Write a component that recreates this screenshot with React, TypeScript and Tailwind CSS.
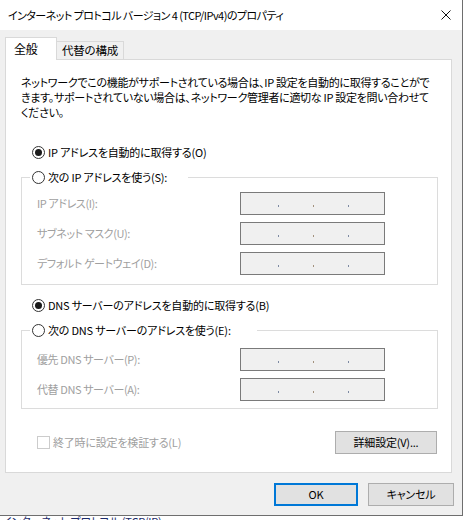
import React from 'react';

const Radio = ({ checked }: { checked?: boolean }) => (
  <div className="w-[13px] h-[13px] shrink-0 rounded-full border border-[#333333] bg-white flex items-center justify-center">
    {checked && <div className="w-[7px] h-[7px] rounded-full bg-[#1a1a1a]" />}
  </div>
);

const IpBox = () => (
  <div className="w-[145px] h-[23px] border border-[#7a7a7a] bg-[#f0f0f0] flex items-start pt-[12px] pl-[37px] gap-[34px]">
    <div className="w-px h-[2px] bg-[#7d8aa3]" />
    <div className="w-px h-[2px] bg-[#a3917d]" />
    <div className="w-px h-[2px] bg-[#7d8aa3]" />
  </div>
);

const Field = ({ label, first }: { label: string; first?: boolean }) => (
  <div className={`flex items-center pl-[15px] ${first ? '' : 'mt-[7px]'}`}>
    <span className="w-[203px] text-[#a0a0a0] tracking-[-0.4px]">{label}</span>
    <IpBox />
  </div>
);

export default function App() {
  return (
    <div className="w-[465px] h-[520px] bg-white overflow-hidden font-['Noto_Sans_CJK_JP',sans-serif] text-[11px] tracking-[-0.2px] text-black [font-feature-settings:'palt']">
      <div className="w-[463px] h-[516px] border-r border-b border-[#6e6e6e] bg-[#f0f0f0] flex flex-col">
        {/* タイトルバー */}
        <div className="h-[30px] bg-white flex items-center pl-[8px] pr-[11px]">
          <span className="flex-1 whitespace-nowrap tracking-[-0.55px]">インターネット プロトコル バージョン 4 (TCP/IPv4)のプロパティ</span>
          <svg width="10" height="10" viewBox="0 0 10 10">
            <path d="M0.5 0.5 L9.5 9.5 M9.5 0.5 L0.5 9.5" stroke="#111" strokeWidth="1" />
          </svg>
        </div>

        <div className="px-[5px] pt-[7px]">
          {/* タブ */}
          <div className="flex items-end h-[22px]">
            <div className="relative z-10 -mb-px w-[52px] h-[23px] bg-white border-l border-t border-r border-[#d9d9d9] flex items-center pl-[8px] text-[12px]">
              全般
            </div>
            <div className="w-[67px] h-[18px] border-t border-r border-[#d9d9d9] flex items-center justify-center text-[11.5px]">
              代替の構成
            </div>
          </div>

          {/* パネル */}
          <div className="w-[447px] h-[414px] border border-[#d9d9d9] bg-white">
            <p className="pl-[15px] pt-[15px] leading-[15px] whitespace-nowrap tracking-[-0.3px]">
              ネットワークでこの機能がサポートされている場合は、IP 設定を自動的に取得することがで
              <br />
              きます。サポートされていない場合は、ネットワーク管理者に適切な IP 設定を問い合わせて
              <br />
              ください。
            </p>

            <div className="mt-[24px] ml-[26px] h-[16px] flex items-center gap-[3px]">
              <Radio checked />
              <span>IP アドレスを自動的に取得する(O)</span>
            </div>

            <fieldset className="mt-[9px] ml-[15px] w-[417px] border border-[#dcdcdc] pb-[9px]">
              <legend className="ml-[8px] pl-[2px] w-[158px] h-[16px] flex items-center gap-[3px]">
                <Radio />
                <span>次の IP アドレスを使う(S):</span>
              </legend>
              <div className="mt-[7px]">
                <Field first label="IP アドレス(I):" />
                <Field label="サブネット マスク(U):" />
                <Field label="デフォルト ゲートウェイ(D):" />
              </div>
            </fieldset>

            <div className="mt-[12px] ml-[26px] h-[16px] flex items-center gap-[3px]">
              <Radio checked />
              <span>DNS サーバーのアドレスを自動的に取得する(B)</span>
            </div>

            <fieldset className="mt-[9px] ml-[15px] w-[417px] border border-[#dcdcdc] pb-[7px]">
              <legend className="ml-[8px] pl-[2px] w-[227px] h-[16px] flex items-center gap-[3px]">
                <Radio />
                <span>次の DNS サーバーのアドレスを使う(E):</span>
              </legend>
              <div className="mt-[10px]">
                <Field first label="優先 DNS サーバー(P):" />
                <Field label="代替 DNS サーバー(A):" />
              </div>
            </fieldset>

            <div className="mt-[22px] h-[23px] flex items-center justify-between pl-[31px] pr-[14px]">
              <div className="flex items-center gap-[3px] text-[#a0a0a0]">
                <div className="w-[13px] h-[13px] border border-[#cccccc] bg-white" />
                <span>終了時に設定を検証する(L)</span>
              </div>
              <button className="w-[102px] h-[23px] bg-[#e1e1e1] border border-[#adadad] flex items-center justify-center">
                詳細設定(V)...
              </button>
            </div>
          </div>

          {/* OK / キャンセル */}
          <div className="mt-[10px] flex justify-end gap-[10px] pr-[3px]">
            <button className="w-[84px] h-[23px] bg-[#e1e1e1] border-2 border-[#0078d7] flex items-center justify-center">
              OK
            </button>
            <button className="w-[86px] h-[23px] bg-[#e1e1e1] border border-[#adadad] flex items-center justify-center">
              キャンセル
            </button>
          </div>
        </div>
      </div>
      <div className="h-[4px] overflow-hidden pl-[2px]">
        <div className="leading-[12px] -mt-[1px] text-[#1a2a6a]">インターネット プロトコル (TCP/IP)</div>
      </div>
    </div>
  );
}
